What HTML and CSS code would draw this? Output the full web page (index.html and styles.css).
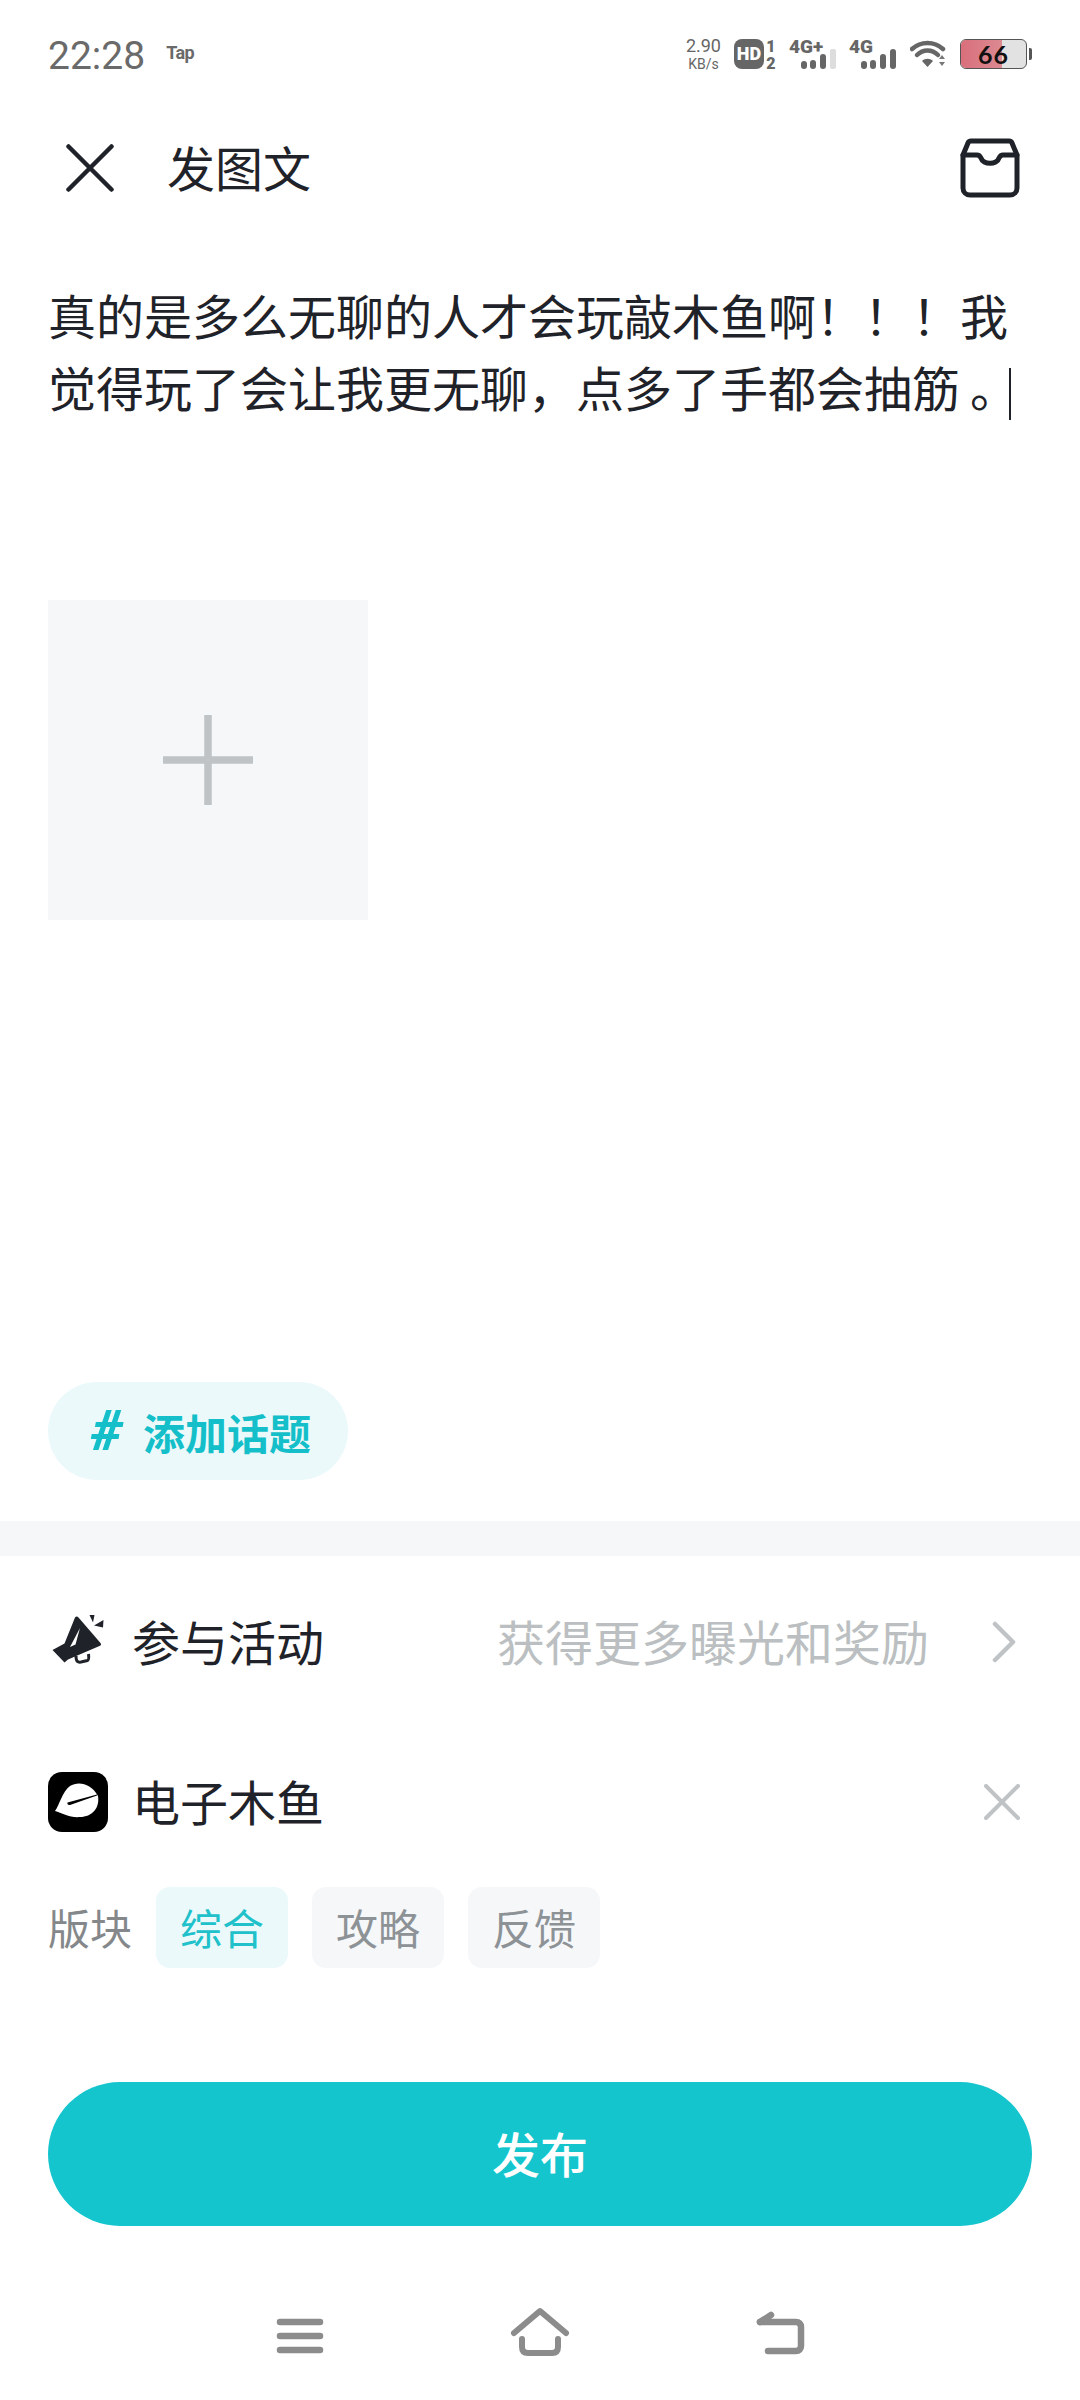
FILE: index.html
```html
<!DOCTYPE html>
<html lang="zh-CN">
<head>
<meta charset="utf-8">
<title>发图文</title>
<link rel="stylesheet" href="styles.css">
</head>
<body>
<div class="page">
  <div class="status">
    <span class="time">22:28</span>
    <span class="tap">Tap</span>
    <div class="status-right">
      <div class="speed"><span class="speed-num">2.90</span><span class="speed-unit">KB/s</span></div>
      <svg class="si" width="42" height="44" viewBox="0 -7 42 44"><rect width="30" height="30" rx="8" fill="#666"/><text x="15" y="21" class="hd">HD</text><text x="37" y="13" class="sim">1</text><text x="37" y="30" class="sim">2</text></svg>
      <svg class="si" width="47" height="44" viewBox="0 -7 47 44"><text x="0" y="14" class="net">4G+</text><rect x="12" y="22" width="6" height="8" rx="3" fill="#666"/><rect x="21" y="21" width="6" height="9" rx="3" fill="#666"/><rect x="31" y="15" width="6" height="15" rx="3" fill="#666"/><rect x="41" y="10" width="6" height="20" rx="2" fill="#ddd"/></svg>
      <svg class="si" width="47" height="44" viewBox="0 -7 47 44"><text x="0" y="14" class="net">4G</text><rect x="12" y="22" width="6" height="8" rx="3" fill="#666"/><rect x="21" y="21" width="6" height="9" rx="3" fill="#666"/><rect x="31" y="15" width="6" height="15" rx="3" fill="#666"/><rect x="41" y="10" width="6" height="20" rx="3" fill="#666"/></svg>
      <svg class="si wifi" width="36" height="28" viewBox="0 0 36 28"><path d="M2 9C11 1 24 1 33 9" fill="none" stroke="#666" stroke-width="4.500" stroke-linecap="round"/><path d="M7 15C13 9 22 9 28 15" fill="none" stroke="#666" stroke-width="4.500" stroke-linecap="round"/><path d="M12 21C15 18 20 18 23 21L17.500 27Z" fill="#666"/><path d="M32 15l3 4h-6zM32 26l3-4h-6z" fill="#777"/></svg>
      <div class="battery">
        <div class="battery-body"><div class="battery-fill"></div><div class="battery-num">66</div></div>
        <div class="battery-nub"></div>
      </div>
    </div>
  </div>

  <div class="header">
    <svg class="close-icon" width="48" height="48" viewBox="0 0 48 48"><path d="M2.500 2.500L45.500 45.500M45.500 2.500L2.500 45.500" stroke="#1f2329" stroke-width="4.500" stroke-linecap="round" fill="none"/></svg>
    <span class="title">发图文</span>
    <svg class="box-icon" width="60" height="60" viewBox="0 0 60 60"><path d="M11 3H49C50.500 3 51.500 3.500 52 5L57 17V50C57 54 54 57 50 57H10C6 57 3 54 3 50V17L8 5C8.500 3.500 9.500 3 11 3Z" fill="none" stroke="#1f2329" stroke-width="5" stroke-linejoin="round"/><path d="M3 17H17C19 17 20 18 21 20C23 27 37 27 39 20C40 18 41 17 43 17H57" fill="none" stroke="#1f2329" stroke-width="5" stroke-linecap="round"/></svg>
  </div>

  <div class="editor">真的是多么无聊的人才会玩敲木鱼啊！！！我<br>觉得玩了会让我更无聊，点多了手都会抽筋<span class="period">。</span><span class="cursor"></span></div>

  <div class="add-image">
    <svg width="92" height="92" viewBox="0 0 92 92"><path d="M46 1V91M1 46H91" stroke="#bfc3c5" stroke-width="7.500" fill="none"/></svg>
  </div>

  <div class="topic"><span class="topic-hash">#</span><span>添加话题</span></div>

  <div class="band"></div>

  <div class="row row-activity">
    <svg class="row-icon" width="60" height="60" viewBox="0 0 60 60"><path d="M27 5.500C28 4 29.500 4 30.500 5.500L52.500 31C53.500 32.500 53 33.500 51.500 34L20 47.500L16.500 50.500L4.500 38L16.500 31.500Z" fill="#1f2329"/><path d="M32 16L22 35L27.500 32.500Z" fill="#fff"/><path d="M41.500 3L46.500 3L45 10.500ZM46 13.500L55.500 8L55 15.500Z" fill="#1f2329"/><path d="M28 44C28 50 30 50.500 33 50L39.500 48.500C41 48 41 46 40.500 42" fill="none" stroke="#1f2329" stroke-width="3"/></svg>
    <span class="row-label">参与活动</span>
    <span class="row-hint">获得更多曝光和奖励</span>
    <svg class="chevron" width="24" height="42" viewBox="0 0 24 42"><path d="M3 3L21 21L3 39" fill="none" stroke="#bfc3c5" stroke-width="4.500" stroke-linecap="round" stroke-linejoin="round"/></svg>
  </div>

  <div class="row row-game">
    <svg class="row-icon" width="60" height="60" viewBox="0 0 60 60"><rect width="60" height="60" rx="14" fill="#000"/><path d="M7 39C12 32 14 20 22 14C30 9 43 11 50 24C52 36 44 45 32 45C22 46 14 41 7 39Z" fill="#fff"/><path d="M19.500 30.500C19 32 20 33.500 22 33L49 23.500L49 22.500Z" fill="#000"/></svg>
    <span class="row-label">电子木鱼</span>
    <svg class="remove" width="36" height="36" viewBox="0 0 36 36"><path d="M2 2L34 34M34 2L2 34" stroke="#bfc3c5" stroke-width="4" stroke-linecap="round" fill="none"/></svg>
  </div>

  <div class="sections">
    <span class="sections-label">版块</span>
    <span class="chip chip-active">综合</span>
    <span class="chip">攻略</span>
    <span class="chip">反馈</span>
  </div>

  <div class="publish">发布</div>

  <div class="nav">
    <svg width="60" height="60" viewBox="0 0 60 60"><path d="M10 16H50M10 30H50M10 44H50" stroke="#8c8c8c" stroke-width="6.500" stroke-linecap="round" fill="none"/></svg>
    <svg width="60" height="60" viewBox="0 0 60 60"><path d="M4 27L30 5L56 27" fill="none" stroke="#8c8c8c" stroke-width="6" stroke-linecap="round" stroke-linejoin="round"/><path d="M12 33V41C12 45 14 47 18 47H42C46 47 48 45 48 41V33" fill="none" stroke="#8c8c8c" stroke-width="6" stroke-linecap="round"/></svg>
    <svg width="60" height="60" viewBox="0 0 60 60"><path d="M10 16H46C49 16 51 18 51 21V40C51 43 49 45 46 45H18" fill="none" stroke="#8c8c8c" stroke-width="6.500" stroke-linecap="round"/><path d="M10 16L21 9" fill="none" stroke="#8c8c8c" stroke-width="6.500" stroke-linecap="round"/></svg>
  </div>
</div>
</body>
</html>
```
FILE: styles.css
```css
* { box-sizing: border-box; }
html, body { margin: 0; padding: 0; background: #fff; }
.page {
  width: 1080px;
  height: 2400px;
  overflow: hidden;
  display: flex;
  flex-direction: column;
  font-family: "Noto Sans CJK SC", "Noto Sans", sans-serif;
  color: #1f2329;
}

.status {
  height: 108px;
  padding: 0 48px 0 48px;
  display: flex;
  align-items: center;
  flex: none;
}
.time { font-family: Roboto, sans-serif; font-size: 39px; color: #6a6a6a; padding-top: 4px; }
.tap { font-family: Roboto, sans-serif; font-size: 18px; font-weight: 700; color: #6a6a6a; margin: -4px 0 0 21px; letter-spacing: -0.5px; }
.status-right { margin-left: auto; display: flex; align-items: center; gap: 13px; }
.si { display: block; flex: none; }
.wifi { margin-left: 1px; margin-right: 1px; }
.speed { display: flex; flex-direction: column; align-items: center; font-family: Roboto, sans-serif; color: #666; line-height: 1; }
.speed-num { font-size: 18px; }
.speed-unit { font-size: 14px; margin-top: 2px; }
.hd { font: 900 18px Roboto, sans-serif; fill: #fff; text-anchor: middle; }
.sim { font: 900 16px Roboto, sans-serif; fill: #666; text-anchor: middle; }
.net { font: 900 19px Roboto, sans-serif; fill: #666; }
.battery { display: flex; align-items: center; gap: 2px; }
.battery-body {
  width: 67px;
  height: 30px;
  border: 1.500px solid #555;
  border-radius: 6px;
  overflow: hidden;
  background: #e2e2e2;
  display: flex;
  align-items: center;
  justify-content: center;
}
.battery-fill { width: 63%; height: 100%; flex: none; background: linear-gradient(90deg, #d96f7b, #dc8a92); margin-right: -63%; }
.battery-num { width: 100%; text-align: center; font: 700 25px/26px Lato, sans-serif; color: #111; letter-spacing: 1px; position: relative; }
.battery-nub { width: 3px; height: 12px; background: #555; border-radius: 0 2px 2px 0; }

.header {
  height: 120px;
  flex: none;
  padding: 0 60px 0 66px;
  display: flex;
  align-items: center;
}
.close-icon { flex: none; }
.title { font-size: 48px; line-height: 72px; margin-left: 53px; padding-bottom: 4px; }
.box-icon { flex: none; margin-left: auto; }

.editor {
  margin: 50px 48px 0;
  height: 144px;
  font-size: 48px;
  line-height: 72px;
  white-space: nowrap;
  flex: none;
}
.period { margin: 0 -10px 0 10px; }
.cursor { display: inline-block; width: 2px; height: 52px; background: #1f2329; vertical-align: -13px; margin-left: 1px; }

.add-image {
  margin: 178px 0 0 48px;
  width: 320px;
  height: 320px;
  flex: none;
  background: #f5f7f9;
  display: flex;
  align-items: center;
  justify-content: center;
}
.add-image svg { display: block; }

.topic {
  margin: 462px 0 0 48px;
  width: 300px;
  height: 98px;
  flex: none;
  border-radius: 49px;
  background: #ebf9fb;
  color: #14bfc9;
  font-size: 42px;
  font-weight: 700;
  display: flex;
  align-items: center;
  padding-left: 43px;
}
.topic-hash { font: italic 900 56px Roboto, sans-serif; width: 52px; flex: none; }

.band { margin-top: 41px; height: 35px; flex: none; background: #f5f7f9; }

.row { display: flex; align-items: center; flex: none; height: 100px; padding: 0 48px; font-size: 48px; }
.row-activity { margin-top: 36px; }
.row-game { margin-top: 60px; }
.row-icon { flex: none; display: block; }
.row-label { margin-left: 24px; line-height: 72px; padding-bottom: 4px; }
.row-hint { margin-left: auto; color: #bbbfc1; padding-bottom: 4px; margin-right: -2px; }
.chevron { flex: none; margin: 0 16px 0 65px; }
.remove { flex: none; margin: 0 12px 0 auto; }

.sections { margin: 35px 0 0 48px; display: flex; align-items: center; gap: 24px; flex: none; height: 81px; }
.sections-label { font-size: 42px; color: #85888a; padding-bottom: 3px; }
.chip {
  width: 132px;
  height: 81px;
  border-radius: 14px;
  background: #f5f7f9;
  color: #8d9296;
  font-size: 42px;
  padding-bottom: 3px;
  display: flex;
  align-items: center;
  justify-content: center;
}
.chip-active { background: #ebf9fb; color: #20c1ca; }

.publish {
  margin: 114px 48px 0;
  height: 144px;
  flex: none;
  border-radius: 72px;
  background: #14c5cd;
  color: #fff;
  font-size: 48px;
  font-weight: 500;
  padding-bottom: 4px;
  display: flex;
  align-items: center;
  justify-content: center;
}

.nav { margin-top: 80px; display: flex; justify-content: center; gap: 180px; flex: none; }
.nav svg { display: block; }
```
